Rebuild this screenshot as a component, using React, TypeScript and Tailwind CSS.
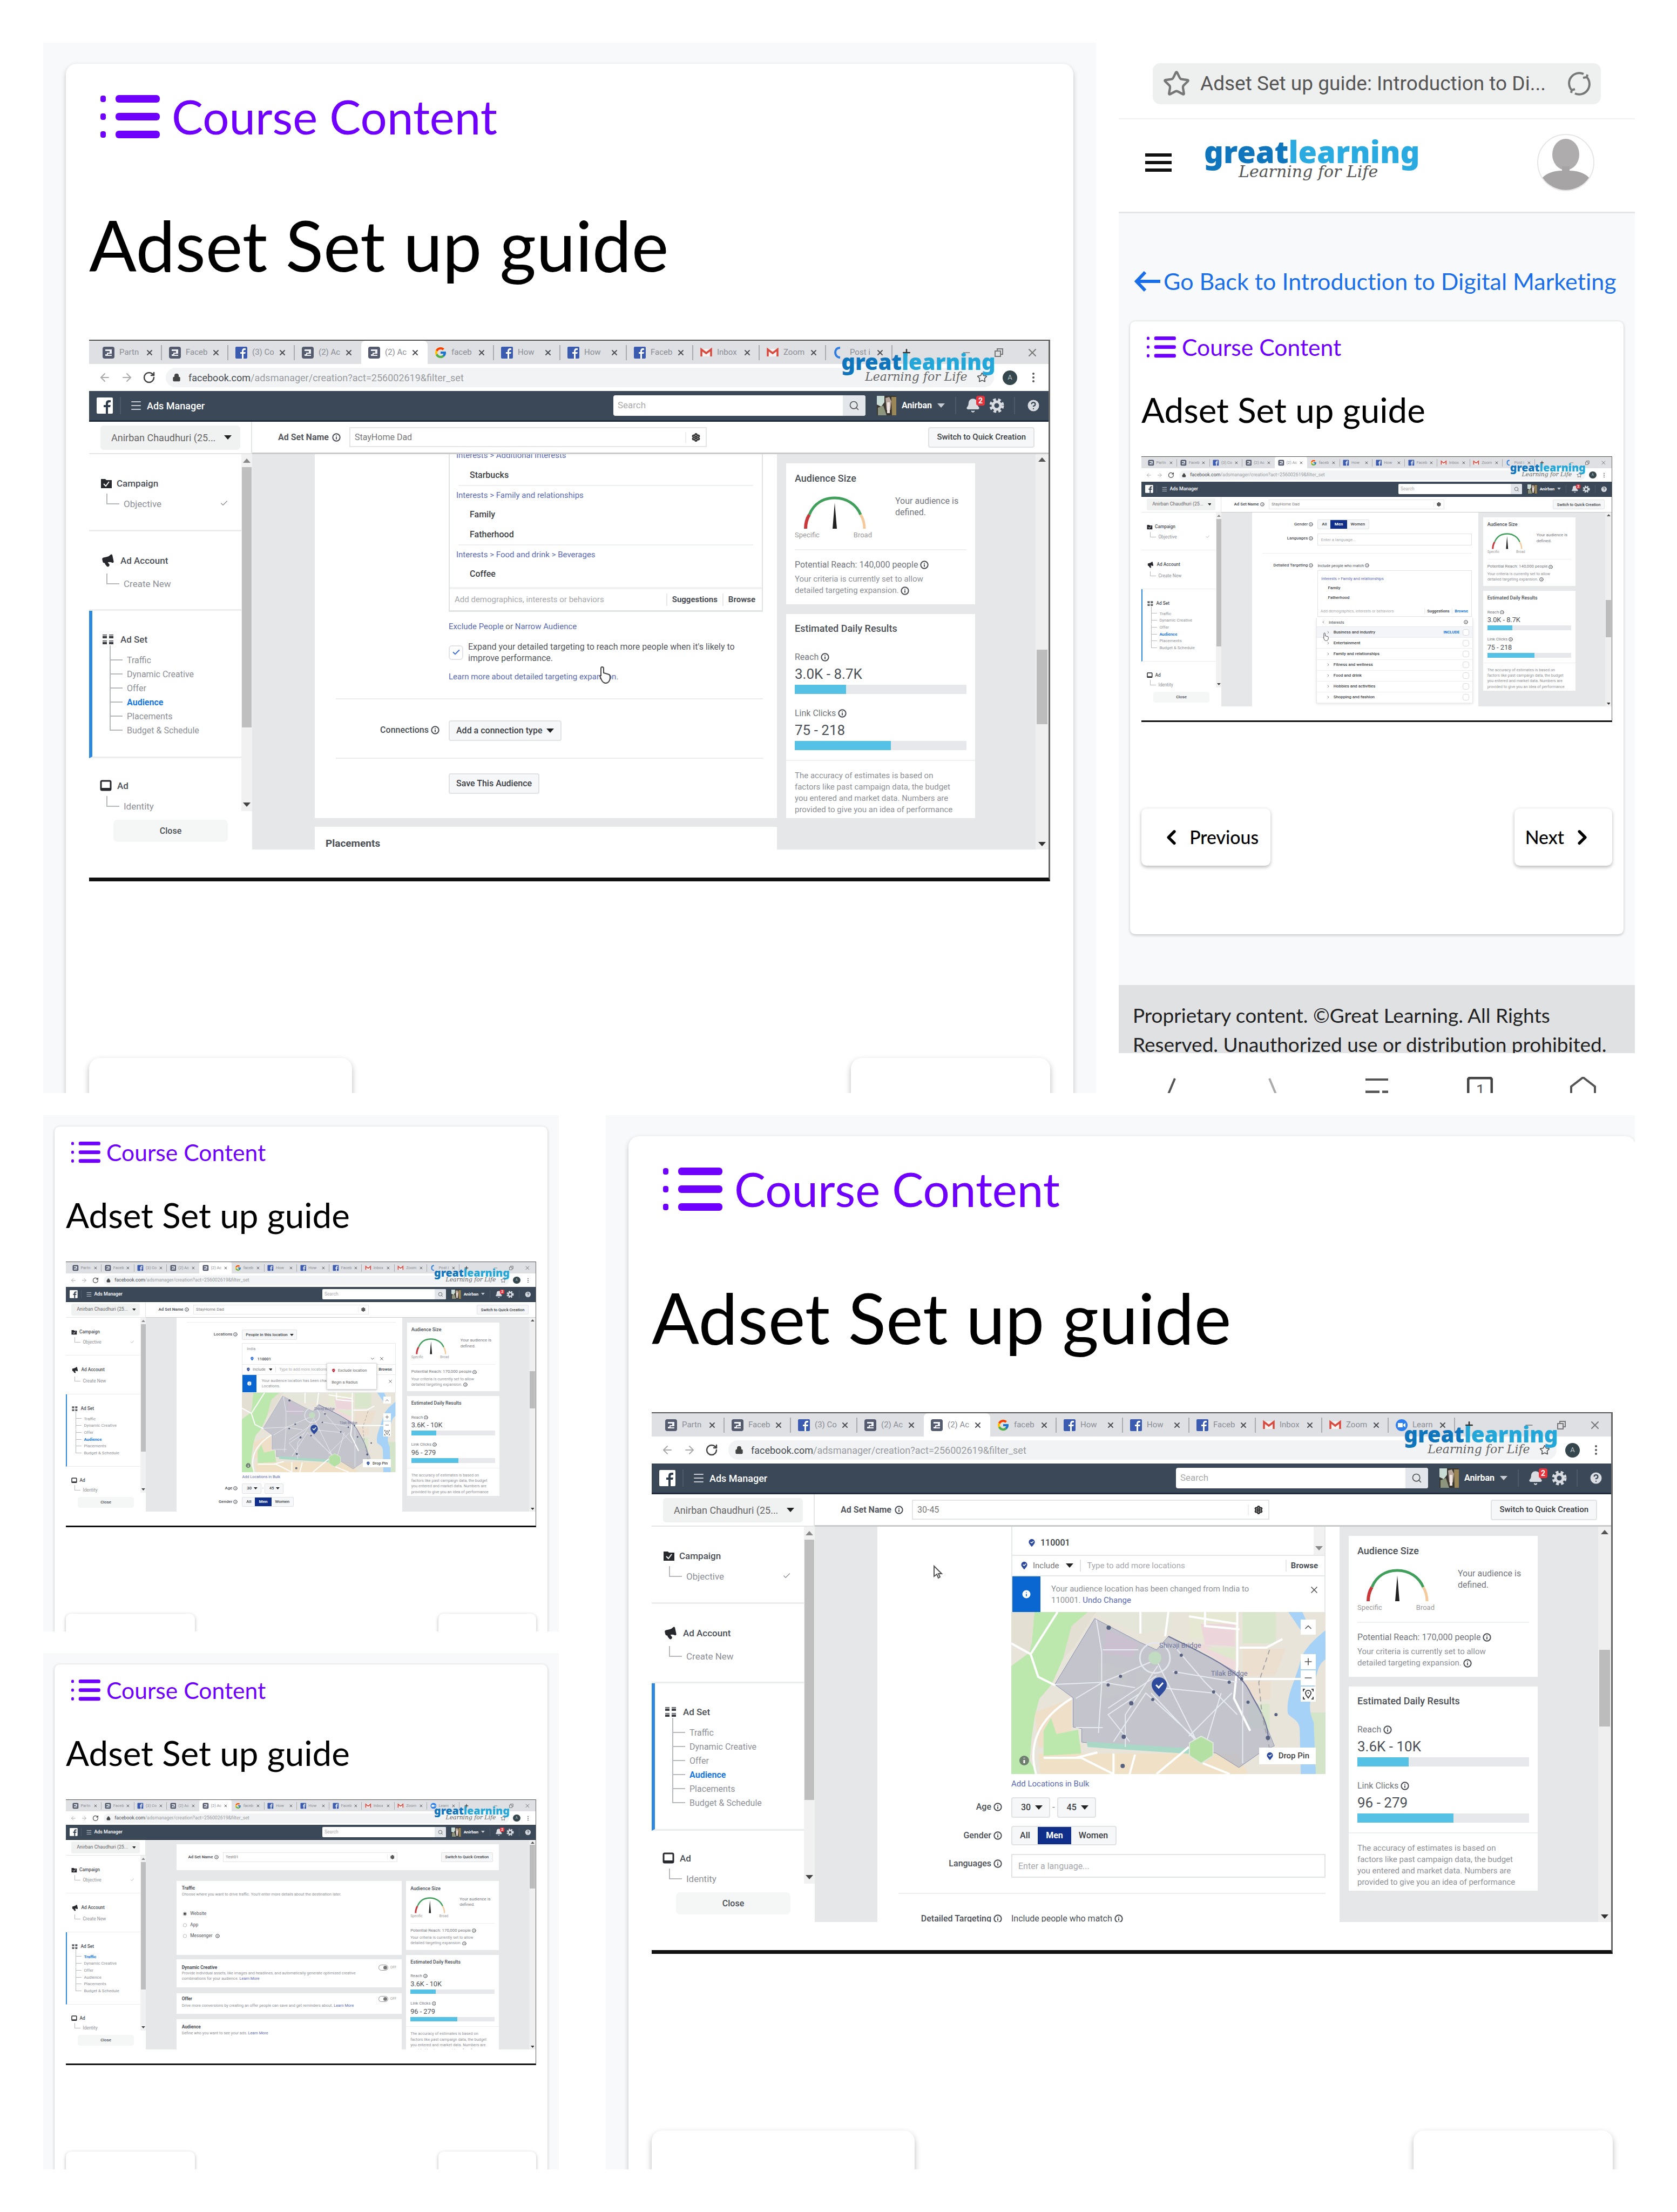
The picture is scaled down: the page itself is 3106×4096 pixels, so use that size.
import React from "react";
import {
  ArrowLeft,
  ArrowRight,
  Bell,
  Check,
  ChevronDown,
  ChevronLeft,
  ChevronRight,
  ChevronUp,
  CircleHelp,
  Info as InfoIcon,
  Lock,
  Megaphone,
  Menu,
  Minus,
  MoreVertical,
  Plus,
  RotateCw,
  Search,
  Settings,
  Star,
  X,
} from "lucide-react";
import { FcGoogle } from "react-icons/fc";

type Scene = "interests" | "browse" | "location" | "map" | "traffic";

/* ---------- small shared pieces ---------- */

const Info = () => <InfoIcon className="inline-block size-4 shrink-0 text-[#4a4d55]" strokeWidth={3} />;

const Caret = ({ className = "" }: { className?: string }) => (
  <svg viewBox="0 0 14 8" className={`h-2 w-3.5 shrink-0 fill-[#222] ${className}`} aria-hidden="true">
    <path d="M0 0h14L7 8z" />
  </svg>
);

function Logo({ large = false }: { large?: boolean }) {
  return (
    <div className="flex flex-col">
      <span
        className={
          large
            ? "font-['Noto_Sans',sans-serif] text-[56px] leading-[56px] font-black text-[#29abe2]"
            : "font-['Noto_Sans',sans-serif] text-[40px] leading-[44px] font-black text-[#22a7d8]"
        }
      >
        <span className="text-[#0f75bc]">great</span>learning
      </span>
      <span
        className={
          large
            ? "-mt-1.5 pl-16 font-['DejaVu_Serif','Liberation_Serif',serif] text-[30px] leading-8 text-[#555] italic"
            : "-mt-1.5 pl-11 font-['DejaVu_Serif','Liberation_Serif',serif] text-[22px] leading-6 text-[#666] italic"
        }
      >
        Learning for Life
      </span>
    </div>
  );
}

/* ---------- browser chrome ---------- */

const AdsFavicon = () => (
  <svg viewBox="0 0 24 24" className="size-6 shrink-0" aria-hidden="true">
    <rect x="1" y="1" width="22" height="22" rx="4" fill="#555b6e" />
    <path d="M6 6h12v12H6z" fill="#eef0f4" />
    <path d="M6 9h8v3H9v3H6zM11 14h7v2h-7z" fill="#555b6e" />
  </svg>
);
const GmailFavicon = () => (
  <svg viewBox="0 0 24 24" className="size-6 shrink-0" aria-hidden="true">
    <rect x="3" y="5" width="18" height="14" fill="#f7f2f2" />
    <path d="M3 19V6l9 7 9-7v13" fill="none" stroke="#d9493d" strokeWidth="3.5" />
  </svg>
);
const ArcFavicon = () => (
  <svg viewBox="0 0 24 24" className="size-6 shrink-0" aria-hidden="true">
    <path d="M14 3C7 3 5 8 5 12s3 9 9 9" fill="none" stroke="#2f7de1" strokeWidth="4" />
  </svg>
);
const ZoomFavicon = () => (
  <svg viewBox="0 0 24 24" className="size-6 shrink-0" aria-hidden="true">
    <circle cx="12" cy="12" r="11" fill="#2d7ff0" />
    <path d="M5 8h9v8H5zM15 11l4-3v8l-4-3z" fill="#fff" />
  </svg>
);

type TabKind = "ads" | "fb" | "google" | "gmail" | "arc" | "zoom";

function Favicon({ kind }: { kind: TabKind }) {
  if (kind === "fb") {
    return (
      <svg viewBox="0 0 24 24" className="size-6 shrink-0" aria-hidden="true">
        <rect x="1" y="1" width="22" height="22" rx="2" fill="#3b5bb0" />
        <path d="M13 23v-9h-3v-3h3V9c0-3 2-5 4-5h3v3h-2c-1 0-2 1-2 2v2h4l-1 3h-3v9z" fill="#fff" />
      </svg>
    );
  }
  if (kind === "google") return <FcGoogle className="size-6 shrink-0" />;
  if (kind === "gmail") return <GmailFavicon />;
  if (kind === "arc") return <ArcFavicon />;
  if (kind === "zoom") return <ZoomFavicon />;
  return <AdsFavicon />;
}

const BASE_TABS: { kind: TabKind; label: string }[] = [
  { kind: "ads", label: "Partn" },
  { kind: "ads", label: "Faceb" },
  { kind: "fb", label: "(3) Co" },
  { kind: "ads", label: "(2) Ac" },
  { kind: "ads", label: "(2) Ac" },
  { kind: "google", label: "faceb" },
  { kind: "fb", label: "How" },
  { kind: "fb", label: "How" },
  { kind: "fb", label: "Faceb" },
  { kind: "gmail", label: "Inbox" },
  { kind: "gmail", label: "Zoom" },
];

function BrowserChrome({ scene }: { scene: Scene }) {
  const last: { kind: TabKind; label: string } =
    scene === "map" || scene === "traffic" ? { kind: "zoom", label: "Learn" } : { kind: "arc", label: "Post i" };
  return (
    <div className="relative">
      <div className="flex h-[43px] items-center bg-[#dee0e4] pr-[18px] pl-3">
        {[...BASE_TABS, last].map((tab, i) => (
          <div
            key={i}
            className={
              i === 4
                ? "flex h-full w-[123px] items-center rounded-t-lg bg-white pr-3 pl-3"
                : "flex h-full w-[123px] items-center pl-3"
            }
          >
            <Favicon kind={tab.kind} />
            <span className="ml-2 w-11 overflow-hidden text-[15px] whitespace-nowrap text-[#8b8e95]">{tab.label}</span>
            <X className="ml-1 size-4 shrink-0 text-[#4c4f55]" strokeWidth={3} />
            {i !== 4 && i !== 3 && <span className="ml-auto h-7 w-0.5 bg-[#a9abb0]" />}
          </div>
        ))}
        <Plus className="ml-4 size-5 text-[#333]" strokeWidth={3} />
        <div className="ml-auto flex items-center gap-10 text-[#777]">
          <Minus className="size-5" />
          <svg viewBox="0 0 20 20" className="size-5 fill-none stroke-current" strokeWidth="2" aria-hidden="true">
            <path d="M3 7h10v10H3zM7 6V3h10v10h-3" />
          </svg>
          <X className="size-6" />
        </div>
      </div>
      <div className="flex h-[50px] items-center bg-white pr-[16px] pl-[17px]">
        <ArrowLeft className="size-6 text-[#aaa]" />
        <ArrowRight className="ml-[17px] size-6 text-[#aaa]" />
        <RotateCw className="ml-[17px] size-6 text-[#444]" strokeWidth={2.5} />
        <div className="ml-[19px] flex h-9 flex-1 items-center rounded-full bg-[#f1f3f4] pr-3 pl-3">
          <Lock className="size-4 fill-[#444] text-[#444]" />
          <span className="ml-3.5 text-[18px] text-[#9a9ca1]">
            <span className="text-[#4a4d52]">facebook.com</span>/adsmanager/creation?act=256002619&amp;filter_set
          </span>
          <Star className="ml-auto size-5 text-[#555]" />
        </div>
        <span className="ml-[16px] flex size-[27px] items-center justify-center rounded-full bg-[#35464d] text-[13px] text-[#b9c5cb]">
          A
        </span>
        <MoreVertical className="ml-[18px] size-6 text-[#555]" />
      </div>
      <div className="absolute top-[17px] left-[78.4%]">
        <Logo />
      </div>
    </div>
  );
}

function NavBar() {
  return (
    <div className="flex h-[57px] items-center border-b-[3px] border-[#1f2c40] bg-[#3a4858] pr-[14px] pl-[14px]">
      <svg viewBox="0 0 30 30" className="size-[30px]" aria-hidden="true">
        <rect width="30" height="30" rx="2" fill="#fff" />
        <path d="M17 30V18h-4v-4h4v-3c0-4 2-6 6-6h3v4h-2c-2 0-3 1-3 3v2h5l-1 4h-4v12z" fill="#2f3c4c" />
      </svg>
      <span className="ml-[13px] h-8 w-0.5 bg-[#4c5a6a]" />
      <Menu className="ml-[16px] size-6 text-[#c7ccd3]" />
      <span className="ml-[8px] text-[18px] font-medium text-white">Ads Manager</span>
      <div className="ml-auto flex h-[38px] w-[467px] overflow-hidden rounded-sm bg-white">
        <input
          aria-label="Search"
          placeholder="Search"
          className="min-w-0 flex-1 px-2 text-[17px] placeholder:text-[#aaa]"
        />
        <button aria-label="Run search" className="flex w-[42px] items-center justify-center bg-[#e3e6ea]">
          <Search className="size-5 text-[#555]" />
        </button>
      </div>
      <svg viewBox="0 0 36 36" className="ml-[21px] size-9" aria-hidden="true">
        <rect width="36" height="36" fill="#3a3630" />
        <path d="M0 0h14v12l-6 8-8-4z" fill="#c9dcd6" />
        <path d="M16 4l7-2 4 8-2 16h-7z" fill="#b9a79d" />
        <path d="M2 22l10-4 6 18H2z" fill="#8d957c" />
        <path d="M27 2h9v34h-8z" fill="#9b8657" />
        <path d="M19 12h5v20h-5z" fill="#efe6e4" />
      </svg>
      <span className="ml-[10px] text-[16px] font-bold text-white">Anirban</span>
      <Caret className="ml-[10px] fill-[#c7ccd3]" />
      <span className="ml-[19px] h-8 w-0.5 bg-[#4c5a6a]" />
      <span className="relative ml-[17px]">
        <Bell className="size-7 fill-[#d9dde2] text-[#d9dde2]" />
        <span className="absolute -top-1 -right-2 rounded-sm bg-[#e8323c] px-1 text-[14px] leading-[18px] font-bold text-white">
          2
        </span>
      </span>
      <svg viewBox="0 0 28 28" className="ml-[16px] size-7 fill-none stroke-[#d9dde2]" aria-hidden="true">
        <circle cx="14" cy="14" r="7" strokeWidth="5" />
        <circle cx="14" cy="14" r="11" strokeWidth="5" strokeDasharray="5 4" />
      </svg>
      <span className="ml-[18px] h-8 w-0.5 bg-[#4c5a6a]" />
      <CircleHelp className="ml-[20px] size-7 fill-[#d9dde2] text-[#3a4858]" />
    </div>
  );
}

/* ---------- ads manager side bar ---------- */

function Elbow({ label, done = false }: { label: string; done?: boolean }) {
  return (
    <div className="mt-2 flex pr-[24px] pl-[32px]">
      <span className="h-5 w-6 border-b-2 border-l-2 border-[#b5b8bc]" />
      <span className="mt-[8px] ml-2 text-[17px] leading-[22px] text-[#8d9096]">{label}</span>
      {done && <Check className="mt-2.5 ml-auto size-4 text-[#8d9096]" />}
    </div>
  );
}

const STEPS = ["Traffic", "Dynamic Creative", "Offer", "Audience", "Placements", "Budget & Schedule"];

function Sidebar({ active }: { active: string }) {
  return (
    <div className="flex w-[302px] shrink-0 flex-col bg-white">
      <div className="flex h-[60px] items-center border-r-2 border-b-2 border-[#e4e5e7] pr-[20px] pl-[21px]">
        <button className="flex h-[45px] flex-1 items-center justify-between rounded-md bg-[#f0f1f1] px-4 text-[18px] text-[#666]">
          <span className="pl-1">Anirban Chaudhuri (25...</span>
          <Caret />
        </button>
      </div>
      <div className="flex h-[661px] overflow-hidden">
        <nav aria-label="Ad steps" className="flex-1">
          <div className="h-[143px] border-b-[3px] border-[#eceded] pt-[43px]">
            <div className="flex items-center pl-[21px] text-[17px] leading-[22px] font-medium text-[#4b4f56]">
              <svg viewBox="0 0 22 20" className="mr-[8px] h-5 w-[22px]" aria-hidden="true">
                <path d="M1 2h8l2 2h10v15H1z" fill="#26282e" />
                <path d="M6 11l4 4 6-8" fill="none" stroke="#fff" strokeWidth="2" />
              </svg>
              Campaign
            </div>
            <Elbow label="Objective" done />
          </div>
          <div className="h-[147px] border-b-[3px] border-[#eceded] pt-[42px]">
            <div className="flex items-center pl-[23px] text-[17px] leading-[22px] font-medium text-[#4b4f56]">
              <Megaphone className="mr-[11px] size-6 -rotate-12 fill-[#26282e] text-[#26282e]" />
              Ad Account
            </div>
            <div className="h-1" />
            <Elbow label="Create New" />
          </div>
          <div className="h-[273px] border-b-[3px] border-b-[#eceded] border-l-[6px] border-l-[#2d88e0] pt-[42px]">
            <div className="flex items-center pl-[18px] text-[17px] leading-[22px] font-medium text-[#4b4f56]">
              <svg viewBox="0 0 22 22" className="mr-3 size-[22px]" aria-hidden="true">
                <path d="M1 2h8v7H1zM13 2h8v7h-8zM1 13h8v7H1zM13 13h8v7h-8z" fill="#3a3c42" />
                <path d="M1 4h8M13 4h8M1 15h8M13 15h8" stroke="#b5b8bc" strokeWidth="2" />
              </svg>
              Ad Set
            </div>
            <ul className="ml-[32px]">
              <li className="h-[15px] border-l-2 border-[#b5b8bc]" />
              {STEPS.map((step, i) => (
                <li key={step} className="flex h-[26px] items-center">
                  <span className="flex h-full w-6 flex-col">
                    <span className="h-[13px] border-b-2 border-l-2 border-[#b5b8bc]" />
                    {i < STEPS.length - 1 && <span className="h-[13px] border-l-2 border-[#b5b8bc]" />}
                  </span>
                  <span
                    className={
                      step === active
                        ? "ml-[8px] text-[16px] font-bold text-[#1877e0]"
                        : "ml-[8px] text-[16px] text-[#8d9096]"
                    }
                  >
                    {step}
                  </span>
                </li>
              ))}
            </ul>
          </div>
          <div className="pt-[40px]">
            <div className="flex items-center pl-[20px] text-[17px] leading-[22px] font-medium text-[#4b4f56]">
              <svg viewBox="0 0 22 22" className="mr-[10px] size-[22px] fill-none stroke-[#26282e]" aria-hidden="true">
                <rect x="2" y="2" width="18" height="17" rx="2" strokeWidth="3" />
                <path d="M3 17h16" strokeWidth="4" />
              </svg>
              Ad
            </div>
            <Elbow label="Identity" />
          </div>
        </nav>
        <div className="flex w-5 flex-col items-center bg-[#f1f1f1] py-2">
          <Caret className="w-2.5 rotate-180 fill-[#888]" />
          <div className="mt-2 h-[482px] w-[18px] bg-[#bfbfbf]" />
          <Caret className="mt-auto w-2.5 fill-[#444]" />
        </div>
      </div>
      <button className="mx-[45px] mt-[16px] h-[41px] rounded-lg bg-[#f5f6f6] text-[16px] font-medium text-[#4b4f56]">
        Close
      </button>
    </div>
  );
}

/* ---------- estimate cards ---------- */

interface Estimate {
  people: string;
  reach: string;
  clicks: string;
}

function Gauge() {
  return (
    <svg viewBox="0 0 143 62" className="h-[62px] w-[143px]" fill="none" aria-hidden="true">
      <path d="M20 62C20 53 22 44 27 36" stroke="#c9383b" strokeWidth="6" />
      <path d="M27 36C35 16 52 5 74 5s40 12 48 31" stroke="#3f9f5b" strokeWidth="5" />
      <path d="M122 36c5 8 7 17 7 26" stroke="#f5c999" strokeWidth="5" />
      <path d="M74 14l4 48h-8z" fill="#222" />
    </svg>
  );
}

function Meter({ label, value, fill }: { label: string; value: string; fill: number }) {
  return (
    <div>
      <div className="flex items-center gap-1 text-[16px] leading-5 text-[#73767d]">
        {label} <Info />
      </div>
      <div className="mt-[6px] text-[26px] leading-[30px] text-[#4b4f56]">{value}</div>
      <div className="mt-[5px] h-[17px] bg-[#e7e8ec]">
        <div className="h-full bg-[#55c1e4]" style={{ width: `${fill}%` }} />
      </div>
    </div>
  );
}

function Estimates({ people, reach, clicks }: Estimate) {
  return (
    <aside className="ml-[17px] w-[350px] shrink-0 text-[#73767d]">
      <section className="h-[261px] bg-white px-4 pt-[17px]">
        <h3 className="text-[18px] leading-[22px] font-medium text-[#4b4f56]">Audience Size</h3>
        <div className="mt-[20px] flex">
          <div>
            <Gauge />
            <div className="mt-1 flex justify-between text-[13px] leading-4 text-[#999]">
              <span>Specific</span>
              <span>Broad</span>
            </div>
          </div>
          <p className="ml-[43px] text-[16px] leading-[21px]">
            Your audience is
            <br />
            defined.
          </p>
        </div>
        <div className="mt-[18px] h-0.5 bg-[#eeeff0]" />
        <p className="mt-4 flex items-center gap-1 text-[16px] leading-[21px]">
          Potential Reach: {people} people <Info />
        </p>
        <p className="mt-[6px] text-[15px] leading-[21px] text-[#8d9096]">
          Your criteria is currently set to allow
          <br />
          detailed targeting expansion. <Info />
        </p>
      </section>
      <section className="mt-[18px] h-[378px] bg-white pt-[16px]">
        <h3 className="px-4 text-[18px] leading-[22px] font-medium text-[#4b4f56]">Estimated Daily Results</h3>
        <div className="mt-8 flex flex-col gap-[26px] px-4">
          <Meter label="Reach" value={reach} fill={30} />
          <Meter label="Link Clicks" value={clicks} fill={56} />
        </div>
        <div className="mt-[18px] h-0.5 bg-[#eeeff0]" />
        <p className="mt-[17px] px-4 text-[15px] leading-[21px] whitespace-nowrap text-[#8d9096]">
          The accuracy of estimates is based on
          <br />
          factors like past campaign data, the budget
          <br />
          you entered and market data. Numbers are
          <br />
          provided to give you an idea of performance
        </p>
      </section>
    </aside>
  );
}

/* ---------- form pieces ---------- */

function Field({ label, children, className = "" }: { label?: string; children: React.ReactNode; className?: string }) {
  return (
    <div className={`flex pr-[26px] ${className}`}>
      <div className="mr-[17px] flex h-[36px] w-[231px] shrink-0 items-center justify-end gap-1 text-[16px] font-medium whitespace-nowrap text-[#4b4f56]">
        {label && (
          <>
            {label} <Info />
          </>
        )}
      </div>
      <div className="min-w-0 flex-1">{children}</div>
    </div>
  );
}

const Rule = ({ className = "" }: { className?: string }) => (
  <div className={`mr-[26px] ml-[39px] h-0.5 bg-[#ececee] ${className}`} />
);

const Crumb = ({ children }: { children: React.ReactNode }) => (
  <div className="flex h-[34px] items-center pl-[12px] text-[15px] whitespace-nowrap text-[#5a6ab0]">{children}</div>
);

const Pick = ({ children }: { children: React.ReactNode }) => (
  <div className="flex h-[37px] items-center pl-[37px] text-[16px] font-medium text-[#3c3f45]">{children}</div>
);

function TargetInput({ browse = false }: { browse?: boolean }) {
  return (
    <div className="flex h-[39px] items-center pr-[12px] pl-[9px] text-[15px]">
      <input
        aria-label="Detailed targeting"
        placeholder="Add demographics, interests or behaviors"
        className="min-w-0 flex-1 placeholder:text-[#a5a7ab]"
      />
      <button className="border-l-2 border-[#e8e8ea] px-[9px] font-bold text-[#4b4f56]">Suggestions</button>
      <button
        className={
          browse
            ? "border-l-2 border-[#e8e8ea] pl-[9px] font-bold text-[#1877d8]"
            : "border-l-2 border-[#e8e8ea] pl-[9px] font-bold text-[#4b4f56]"
        }
      >
        Browse
      </button>
    </div>
  );
}

const GreyButton = ({ children, small = false }: { children: React.ReactNode; small?: boolean }) => (
  <button
    className={
      small
        ? "ml-auto flex h-[38px] items-center rounded-sm border-2 border-[#e1e2e4] bg-[#f6f7f8] px-3.5 text-[15px] font-medium whitespace-nowrap text-[#3c3f45]"
        : "flex h-[38px] items-center gap-2 rounded-sm border-2 border-[#e1e2e4] bg-[#f6f7f8] px-3 text-[16px] font-medium whitespace-nowrap text-[#3c3f45]"
    }
  >
    {children}
  </button>
);

function GenderRow({ className = "" }: { className?: string }) {
  return (
    <Field label="Gender" className={className}>
      <div className="inline-flex h-[36px] rounded-sm border-2 border-[#e1e2e4] bg-[#f6f7f8] text-[16px] font-medium text-[#3c3f45]">
        <button className="w-[47px]">All</button>
        <button className="w-[62px] bg-[#0f2f8a] font-bold text-white">Men</button>
        <button className="w-[82px]">Women</button>
      </div>
    </Field>
  );
}

function LanguageRow({ className = "" }: { className?: string }) {
  return (
    <Field label="Languages" className={className}>
      <input
        aria-label="Languages"
        placeholder="Enter a language..."
        className="h-[44px] w-full border-2 border-[#e1e2e4] px-[11px] text-[16px] placeholder:text-[#a5a7ab]"
      />
    </Field>
  );
}

function AgeRow({ className = "" }: { className?: string }) {
  return (
    <Field label="Age" className={className}>
      <div className="flex items-center gap-1 text-[#777]">
        <GreyButton>
          <span className="pl-1">30</span> <Caret />
        </GreyButton>
        -
        <GreyButton>
          <span className="pl-1">45</span> <Caret />
        </GreyButton>
      </div>
    </Field>
  );
}

/* ---------- scenes ---------- */

function InterestsForm() {
  return (
    <div className="flex min-w-0 flex-1 flex-col">
      <div className="h-[674px] shrink-0 bg-white">
        <Field>
          <div className="border-x-2 border-b-[3px] border-[#e1e2e4]">
            <div className="-mt-2 flex h-7 pl-[12px] text-[15px] leading-5 text-[#5a6ab0]">
              Interests &gt; Additional Interests
            </div>
            <Pick>Starbucks</Pick>
            <div className="mx-4 h-0.5 bg-[#eeeff0]" />
            <Crumb>Interests &gt; Family and relationships</Crumb>
            <Pick>Family</Pick>
            <Pick>Fatherhood</Pick>
            <div className="mx-4 h-0.5 bg-[#eeeff0]" />
            <Crumb>Interests &gt; Food and drink &gt; Beverages</Crumb>
            <Pick>Coffee</Pick>
            <div className="mt-[6px] h-1 bg-[#f1f1f2]" />
            <TargetInput />
          </div>
          <p className="mt-[17px] text-[15px] leading-[21px] text-[#5a6ab0]">
            <a href="#exclude">Exclude People</a> <span className="text-[#666]">or</span>{" "}
            <a href="#narrow">Narrow Audience</a>
          </p>
          <label className="mt-4 flex items-center text-[16px] leading-[21px] text-[#55585e]">
            <input type="checkbox" className="peer sr-only" defaultChecked />
            <span className="mr-[9px] flex size-[27px] shrink-0 items-center justify-center rounded-md border-2 border-[#e1e2ea]">
              <Check className="size-4 text-[#3f6fd0]" strokeWidth={3} />
            </span>
            <span className="whitespace-nowrap">
              Expand your detailed targeting to reach more people when it's likely to
              <br />
              improve performance.
            </span>
          </label>
          <a href="#learn" className="mt-3.5 block text-[15px] leading-[21px] text-[#5a6ab0]">
            Learn more about detailed targeting expansion.
          </a>
        </Field>
        <Rule className="mt-[29px]" />
        <Field label="Connections" className="mt-[39px]">
          <GreyButton>
            Add a connection type <Caret />
          </GreyButton>
        </Field>
        <Rule className="mt-[31px]" />
        <Field className="mt-[27px]">
          <GreyButton>Save This Audience</GreyButton>
        </Field>
      </div>
      <div className="mt-4 h-[60px] shrink-0 bg-white pt-[19px] pl-[20px] text-[19px] leading-6 font-bold text-[#4b4f56]">
        Placements
      </div>
    </div>
  );
}

const CATEGORIES = [
  "Business and industry",
  "Entertainment",
  "Family and relationships",
  "Fitness and wellness",
  "Food and drink",
  "Hobbies and activities",
  "Shopping and fashion",
];

function BrowseForm() {
  return (
    <div className="min-w-0 flex-1 bg-white">
      <GenderRow className="pt-[26px]" />
      <LanguageRow className="mt-[18px]" />
      <Rule className="mt-[29px]" />
      <Field label="Detailed Targeting" className="mt-[26px]">
        <div className="flex h-[38px] items-center gap-1 text-[15px] text-[#4b4f56]">
          Include people who match <Info />
        </div>
        <div className="border-2 border-[#e1e2e4] pt-3">
          <Crumb>Interests &gt; Family and relationships</Crumb>
          <Pick>Family</Pick>
          <Pick>Fatherhood</Pick>
          <div className="h-[11px]" />
          <TargetInput browse />
        </div>
        <ul className="-mx-1 mt-1 border-x-2 border-[#e6e7e9] bg-white text-[16px] text-[#3c3f45] shadow-[0_4px_10px_rgba(0,0,0,0.12)]">
          <li className="flex h-[36px] items-center gap-3 border-b-2 border-[#e6e7e9] px-4 text-[15px]">
            <ChevronLeft className="size-4" /> Interests <span className="ml-auto" />
            <Info />
          </li>
          {CATEGORIES.map((c, i) => (
            <li
              key={c}
              className={
                i === 0
                  ? "flex h-[41px] items-center border-b-2 border-[#eceded] bg-[#f4f5f8] pr-3 pl-[34px] font-medium"
                  : "flex h-[41px] items-center border-b-2 border-[#eceded] pr-3 pl-[34px] font-medium"
              }
            >
              <ChevronRight className="mr-3 size-4" />
              <label htmlFor={`cat-${i}`}>{c}</label>
              {i === 0 && <span className="ml-auto text-[15px] font-bold text-[#1877d8]">INCLUDE</span>}
              <input
                id={`cat-${i}`}
                type="checkbox"
                className={
                  i === 0
                    ? "ml-3 size-6 appearance-none rounded-lg border-2 border-[#d5d7dc] bg-white"
                    : "ml-auto size-6 appearance-none rounded-lg border-2 border-[#d5d7dc] bg-white"
                }
              />
            </li>
          ))}
        </ul>
      </Field>
    </div>
  );
}

function PinIcon({ className = "" }: { className?: string }) {
  return (
    <svg viewBox="0 0 20 20" className={`shrink-0 ${className}`} aria-hidden="true">
      <path d="M10 19C5 13 3 11 3 8a7 7 0 0114 0C17 11 15 13 10 19z" />
      <path d="M7 8l3 2 4-4" fill="none" stroke="#fff" strokeWidth="2" />
    </svg>
  );
}

function CityMap() {
  return (
    <div className="relative h-[300px] overflow-hidden">
      <svg viewBox="0 0 584 300" preserveAspectRatio="none" className="size-full" aria-hidden="true">
        <rect width="584" height="300" fill="#e8e4da" />
        <path d="M330 0h90v58l-90-10z" fill="#e6e8d3" />
        <path d="M352 22h64v42l-56-4z" fill="#ecd6dc" />
        <path d="M430 0h62v58h-62zM440 170h40v50l-40-10z" fill="#d9e6cc" />
        <path d="M334 60h30l52 26v34l-30-30z" fill="#eed9db" />
        <path d="M360 66h56v24z" fill="#dfe8cf" />
        <path d="M430 68h80l-20 50h-60zM432 128h50v34h-40z" fill="#ecdfcf" />
        <path d="M540 186h44v114h-44z" fill="#d3e4c8" />
        <path d="M44 186l68-26v60l20 30H50z" fill="#f0dfc8" />
        <path d="M50 262h370l20 38H54z" fill="#efe0c6" />
        <path d="M160 0h140v30l-60 10-80-34z" fill="#e3e6d8" />
        {/* parks */}
        <path
          d="M43 0h114l-30 40-31 47-21 47-23 27-8 30-6 40-4 44 14 25H0V100l30-22 8-20z"
          fill="#bde8ad"
        />
        <path d="M0 0h43l-6 60-3 16L0 60z" fill="#e3dfd2" />
        <path d="M112 26l30-26h14l-40 66-20 20z" fill="#e3dfd2" />
        <path d="M60 220l14-24 10 30 40-8 6 44-70 4z" fill="#bde8ad" />
        {/* river */}
        <path
          d="M584 34c-26 20-44 40-48 62-8 30-26 60-22 92 8 10 22 12 22 30l2 82h28l-4-96c-10-20-8-40 0-56 4-24 6-52 22-60z"
          fill="#a6d2f8"
        />
        <path d="M515 0h26l10 22-10 16z" fill="#a6d2f8" />
        {/* highlighted area */}
        <path
          d="M155 12l84 44 31 14 22-25 60 30 71 39 36 60 30 74-20 8-46 32-43-27-170-13-79-7v-25l-16-3v-54l-34-25z"
          fill="#b3b7c6"
          fillOpacity="0.7"
          stroke="#8a92b4"
          strokeWidth="1"
        />
        <path d="M176 32l60 26-10 26-54-8z" fill="#cdbfd0" fillOpacity="0.7" />
        <path d="M160 90l60 16-10 50-50 4zM230 110l36-8 6 40-40 30z" fill="#c6c8ca" fillOpacity="0.5" />
        {/* boulevard and roads */}
        <path d="M140 240l214 14-2 10-210-14z" fill="#a9d8c6" />
        <g fill="none" stroke="#fff" strokeWidth="4">
          <path d="M0 58l36 20L86 0M36 78l14 42 32 16" />
          <path d="M46 300c-14-50 0-100 66-140" />
          <path d="M60 270h70l60 30M330 250l-60 50M356 280l50 20M120 270l40-10M190 262v38M230 264l-10 36" />
          <path d="M292 0l-6 45M240 0v40M360 0v26l64 6M420 0v100l-6 60 30 60M424 66h50l30-16M423 124h120M330 8l90 14" />
        </g>
        <g fill="none" stroke="#e8eaf2" strokeWidth="2">
          <path d="M170 70h66M158 14l10 60v60l-6 90M82 134l88-4 100-42M270 90l80 160M260 150l94 100M190 240l60-90 110 100M300 110l120 20M430 130v150" />
          <path d="M240 150l-60 40 40 50M275 140l100 10M330 230l80-80M212 250v-60l60-90M120 160l50-30 60 10M120 214h50M300 60l60 70 60 60M270 118l-90 60M390 150l-30 100" />
        </g>
        <path d="M353 230l22 12v24l-22 14-22-14v-24z" fill="#b4e0a4" stroke="#dfe9df" strokeWidth="2" />
        <circle cx="267" cy="85" r="28" fill="none" stroke="#e4e8ee" strokeWidth="3" />
        <circle cx="267" cy="85" r="12" fill="#c1dcc0" />
        <path d="M292 45c60 30 130 60 150 100 14 30 34 50 36 92" fill="none" stroke="#70759a" strokeWidth="2" />
        <path d="M480 70l-20 60 6 60 20 90" fill="none" stroke="#a5a5a5" strokeWidth="2" strokeDasharray="9 6" />
        <g fill="#55617f">
          <circle cx="181" cy="29" r="4" />
          <circle cx="203" cy="119" r="3" />
          <circle cx="180" cy="135" r="3" />
          <circle cx="223" cy="169" r="4" />
          <circle cx="263" cy="162" r="3" />
          <circle cx="306" cy="112" r="3" />
          <circle cx="316" cy="80" r="3" />
          <circle cx="376" cy="148" r="3" />
          <circle cx="405" cy="130" r="3" />
          <circle cx="428" cy="124" r="3" />
          <circle cx="440" cy="167" r="3" />
          <circle cx="209" cy="231" r="4" />
          <circle cx="207" cy="285" r="4" />
          <circle cx="477" cy="233" r="4" />
          <circle cx="492" cy="190" r="3" />
        </g>
        <text x="275" y="66" fontSize="13" fill="#70759a" fontFamily="Roboto, sans-serif">
          Shivaji Bridge
        </text>
        <text x="371" y="118" fontSize="13" fill="#70759a" fontFamily="Roboto, sans-serif">
          Tilak Bridge
        </text>
        <path d="M275 157c-8-9-14-14-14-22a14 14 0 0128 0c0 8-6 13-14 22z" fill="#2d4a9c" />
        <path d="M269 135l5 5 8-9" fill="none" stroke="#fff" strokeWidth="3" />
        <circle cx="24" cy="275" r="9" fill="#6f7f6f" />
        <path d="M24 270v1M24 274v6" stroke="#fff" strokeWidth="3" />
      </svg>
      <div className="absolute top-[14px] right-[18px] flex flex-col text-[#555]">
        <button aria-label="Collapse map" className="flex size-7 items-center justify-center bg-white">
          <ChevronUp className="size-5" />
        </button>
        <button aria-label="Zoom in" className="mt-9 flex size-7 items-center justify-center bg-white">
          <Plus className="size-5" />
        </button>
        <button aria-label="Zoom out" className="mt-0.5 flex size-7 items-center justify-center bg-white">
          <Minus className="size-5" />
        </button>
        <button aria-label="Locate" className="mt-0.5 flex size-7 items-center justify-center bg-white">
          <svg viewBox="0 0 20 20" className="size-5 fill-none stroke-[#444]" strokeWidth="2" aria-hidden="true">
            <path d="M10 17c-3-4-5-6-5-9a5 5 0 0110 0c0 3-2 5-5 9z" />
            <path d="M1 5V1h3M16 1h3v4M1 15v4h3M19 15v4h-3M9 8h2" />
          </svg>
        </button>
      </div>
      <button className="absolute right-[18px] bottom-[18px] flex h-[31px] items-center gap-2 bg-white px-3 text-[15px] font-medium text-[#444]">
        <PinIcon className="size-4 fill-[#2d4a9c]" /> Drop Pin
      </button>
    </div>
  );
}

function IncludeRow() {
  return (
    <div className="flex h-10 items-center border-y-2 border-[#e6e7e9] pr-3 pl-[14px] text-[15px] text-[#777]">
      <PinIcon className="mr-2 size-4 fill-[#2d4a9c]" />
      <span>Include</span>
      <Caret className="mr-3 ml-3 w-2.5" />
      <input
        aria-label="Locations"
        placeholder="Type to add more locations"
        className="min-w-0 flex-1 border-l-2 border-[#e1e2e4] pl-3 placeholder:text-[#a5a7ab]"
      />
      <button className="border-l-2 border-[#e8e8ea] pl-2 font-bold text-[#4b4f56]">Browse</button>
    </div>
  );
}

function Notice({ children }: { children: React.ReactNode }) {
  return (
    <div className="flex h-[66px] text-[15px] leading-[21px] text-[#8d9096]">
      <span className="flex w-[52px] shrink-0 items-center justify-center bg-[#0a66d0]">
        <InfoIcon className="size-5 fill-white text-[#0a66d0]" />
      </span>
      <p className="flex-1 pt-[13px] pl-[20px]">{children}</p>
      <X className="mt-[15px] mr-[9px] size-5 text-[#555]" />
    </div>
  );
}

function LocationForm() {
  return (
    <div className="min-w-0 flex-1 bg-white">
      <Rule className="mt-[16px]" />
      <Field label="Locations" className="mt-[27px]">
        <GreyButton>
          People in this location <Caret />
        </GreyButton>
        <div className="relative mt-3 border-2 border-[#e6e7e9] text-[15px]">
          <div className="flex h-[78px] flex-col justify-center pr-[40px] pl-[16px] text-[#8d9096]">
            <span className="flex h-[38px] items-center">India</span>
            <span className="flex h-[38px] items-center font-medium text-[#3c3f45]">
              <PinIcon className="mx-3 size-4 fill-[#2d6fe0]" /> 110001
              <ChevronDown className="mr-4 ml-auto size-5" />
              <X className="size-5" />
            </span>
          </div>
          <IncludeRow />
          <Notice>
            Your audience location has been changed
            <br />
            Locations.
          </Notice>
          <div className="absolute top-[74px] right-[68px] flex h-[100px] w-[190px] flex-col justify-around border-2 border-[#d9dadd] bg-white px-4 py-1 shadow-[0_3px_8px_rgba(0,0,0,0.25)]">
            <button className="flex items-center gap-2 text-[15px] text-[#666]">
              <PinIcon className="size-4 fill-[#c2253a]" /> Exclude location
            </button>
            <button className="text-left text-[15px] text-[#666]">Begin a Radius</button>
          </div>
        </div>
        <CityMap />
        <a href="#bulk" className="mt-2 block text-[15px] leading-5 text-[#5a6ab0]">
          Add Locations in Bulk
        </a>
      </Field>
      <AgeRow className="mt-[15px]" />
      <GenderRow className="mt-[14px]" />
    </div>
  );
}

function MapForm() {
  return (
    <div className="min-w-0 flex-1 bg-white">
      <Field>
        <div className="border-x-2 border-[#e6e7e9]">
          <div className="flex h-[52px] items-center pt-2 pl-[28px] text-[16px] font-medium text-[#3c3f45]">
            <PinIcon className="mr-2 size-4 fill-[#2d4a9c]" /> 110001
            <span className="-mt-2 ml-auto flex h-[52px] w-5 items-end justify-center bg-[#f1f1f1] pb-2">
              <Caret className="w-2.5 fill-[#888]" />
            </span>
          </div>
          <IncludeRow />
          <Notice>
            Your audience location has been changed from India to
            <br />
            110001.{" "}
            <a href="#undo" className="text-[#5a6ab0]">
              Undo Change
            </a>
          </Notice>
        </div>
        <CityMap />
        <a href="#bulk" className="mt-2 block text-[15px] leading-5 text-[#5a6ab0]">
          Add Locations in Bulk
        </a>
      </Field>
      <AgeRow className="mt-[15px]" />
      <GenderRow className="mt-[15px]" />
      <LanguageRow className="mt-[16px]" />
      <Rule className="mt-[28px]" />
      <Field label="Detailed Targeting" className="mt-[28px]">
        <div className="flex h-[36px] items-center gap-1 text-[16px] text-[#4b4f56]">
          Include people who match <Info />
        </div>
      </Field>
    </div>
  );
}

function Switch({ label }: { label: string }) {
  return (
    <span className="flex items-center gap-2 text-[13px] text-[#999]">
      <button
        role="switch"
        aria-checked="false"
        aria-label={label}
        className="flex h-[22px] w-9 items-center justify-end rounded-full border-2 border-[#8d9096] bg-white p-0.5"
      >
        <span className="h-full w-3.5 rounded-full bg-[#777]" />
      </button>
      OFF
    </span>
  );
}

function TrafficForm() {
  return (
    <div className="flex min-w-0 flex-1 flex-col text-[15px] leading-5 text-[#8d9096]">
      <section className="h-[280px] shrink-0 bg-white px-5 pt-[15px]">
        <h3 className="text-[17px] leading-[22px] font-bold text-[#4b4f56]">Traffic</h3>
        <p className="mt-1 whitespace-nowrap">
          Choose where you want to drive traffic. You'll enter more details about the destination later.
        </p>
        <div role="radiogroup" aria-label="Traffic destination" className="mt-[42px] flex flex-col text-[17px] text-[#4b4f56]">
          {["Website", "App", "Messenger"].map((name, i) => (
            <label key={name} className="flex h-[42px] items-center gap-3">
              <input type="radio" name="destination" defaultChecked={i === 0} className="ml-1 size-4 accent-[#333]" />
              {name}
              {i === 2 && <Info />}
            </label>
          ))}
        </div>
      </section>
      <section className="mt-4 h-[106px] shrink-0 bg-white px-5 pt-5">
        <div className="flex justify-between">
          <h3 className="text-[17px] leading-[22px] font-bold text-[#4b4f56]">Dynamic Creative</h3>
          <Switch label="Dynamic Creative" />
        </div>
        <p className="whitespace-nowrap">
          Provide individual assets, like images and headlines, and automatically generate optimized creative
          <br />
          combinations for your audience.{" "}
          <a href="#dynamic" className="text-[#5a6ab0]">
            Learn More
          </a>
        </p>
      </section>
      <section className="mt-[21px] h-[78px] shrink-0 bg-white px-5 pt-3">
        <div className="flex justify-between">
          <h3 className="text-[17px] leading-[22px] font-bold text-[#4b4f56]">Offer</h3>
          <Switch label="Offer" />
        </div>
        <p className="mt-1 whitespace-nowrap">
          Drive more conversions by creating an offer people can save and get reminders about.{" "}
          <a href="#offer" className="text-[#5a6ab0]">
            Learn More
          </a>
        </p>
      </section>
      <section className="mt-[21px] h-[120px] shrink-0 bg-white px-5 pt-[18px]">
        <h3 className="text-[17px] leading-[22px] font-bold text-[#4b4f56]">Audience</h3>
        <p className="mt-0.5 whitespace-nowrap">
          Define who you want to see your ads.{" "}
          <a href="#audience" className="text-[#5a6ab0]">
            Learn More
          </a>
        </p>
      </section>
    </div>
  );
}

function NameFields({ name, short = false }: { name: string; short?: boolean }) {
  return (
    <>
      <span className="flex items-center gap-1.5 text-[16px] font-bold whitespace-nowrap text-[#55585e]">
        Ad Set Name <Info />
      </span>
      <div className={`ml-4 flex h-[37px] items-center border-2 border-[#e4e5e7] bg-white ${short ? "w-[660px]" : "w-[662px]"}`}>
        <input aria-label="Ad Set Name" defaultValue={name} className="min-w-0 flex-1 px-2 text-[16px] text-[#777]" />
        <span className="flex h-5 items-center border-l-2 border-[#eee] px-2.5">
          <Settings className="size-4 text-[#333]" strokeWidth={4} />
        </span>
      </div>
      <GreyButton small>Switch to Quick Creation</GreyButton>
    </>
  );
}

function PageScrollbar({ thumb }: { thumb: string }) {
  return (
    <div className="ml-auto flex w-6 shrink-0 flex-col items-center bg-[#efefef] py-1.5">
      <Caret className="w-2.5 rotate-180 fill-[#555]" />
      <div className={`w-5 bg-[#bcbcbc] ${thumb}`} />
      <Caret className="mt-auto w-2.5 fill-[#333]" />
    </div>
  );
}

const HandCursor = () => (
  <svg viewBox="0 0 24 34" className="h-[34px] w-6" aria-hidden="true">
    <path
      d="M6 2c2 0 3 1 3 3v8l10 3c2 1 2 3 2 5 0 6-3 11-8 11-6 0-8-6-10-11-2-3 0-4 1-2V5c0-2 1-3 2-3z"
      fill="#fff"
      stroke="#444"
      strokeWidth="2"
    />
  </svg>
);

interface SceneData extends Estimate {
  name: string;
  thumb: string;
}

const SCENES: Record<Scene, SceneData> = {
  interests: {
    name: "StayHome Dad",
    people: "140,000",
    reach: "3.0K - 8.7K",
    clicks: "75 - 218",
    thumb: "mt-[348px] h-[138px]",
  },
  browse: {
    name: "StayHome Dad",
    people: "140,000",
    reach: "3.0K - 8.7K",
    clicks: "75 - 218",
    thumb: "mt-[316px] h-[140px]",
  },
  location: {
    name: "StayHome Dad",
    people: "170,000",
    reach: "3.6K - 10K",
    clicks: "96 - 279",
    thumb: "mt-[188px] h-[140px]",
  },
  map: {
    name: "30-45",
    people: "170,000",
    reach: "3.6K - 10K",
    clicks: "96 - 279",
    thumb: "mt-[214px] h-[142px]",
  },
  traffic: {
    name: "Test01",
    people: "170,000",
    reach: "3.6K - 10K",
    clicks: "96 - 279",
    thumb: "mt-1 h-[167px]",
  },
};

function VideoFrame({ scene }: { scene: Scene }) {
  const { name, thumb, ...estimate } = SCENES[scene];
  return (
    <div className="flex h-[1003px] flex-col overflow-hidden border-t-2 border-r-[3px] border-b-[7px] border-t-[#555] border-r-[#666] border-b-[#111] bg-white font-[Roboto,sans-serif]">
      <BrowserChrome scene={scene} />
      <NavBar />
      <div className="flex h-[792px] shrink-0 overflow-hidden">
        <Sidebar active={scene === "traffic" ? "Traffic" : "Audience"} />
        {scene === "traffic" ? (
          <div className="flex min-w-0 flex-1 bg-[#e6e7e8]">
            <div className="mr-[115px] ml-[116px] flex min-w-0 flex-1 flex-col pt-[16px]">
              <div className="flex h-[99px] shrink-0 items-center bg-white pr-[22px] pl-[44px]">
                <NameFields name={name} short />
              </div>
              <div className="mt-[41px] flex">
                <TrafficForm />
                <Estimates {...estimate} />
              </div>
            </div>
            <PageScrollbar thumb={thumb} />
          </div>
        ) : (
          <div className="flex min-w-0 flex-1 flex-col">
            <div className="flex h-[60px] shrink-0 items-center border-b-[3px] border-[#c9cacc] pr-[26px] pl-[48px]">
              <NameFields name={name} />
            </div>
            <div className="relative flex min-h-0 flex-1 overflow-hidden bg-[#e6e7e8] pl-[116px]">
              {scene === "interests" && <InterestsForm />}
              {scene === "browse" && <BrowseForm />}
              {scene === "location" && <LocationForm />}
              {scene === "map" && <MapForm />}
              <div className="mr-[112px] pt-[17px]">
                <Estimates {...estimate} />
              </div>
              <PageScrollbar thumb={thumb} />
              {scene === "interests" && (
                <span className="absolute top-[392px] left-[642px]">
                  <HandCursor />
                </span>
              )}
              {scene === "browse" && (
                <span className="absolute top-[452px] left-[384px]">
                  <HandCursor />
                </span>
              )}
              {scene === "map" && (
                <svg viewBox="0 0 18 26" className="absolute top-[71px] left-[219px] h-[26px] w-[18px]" aria-hidden="true">
                  <path d="M2 2v19l5-4 3 7 3-2-3-6h6z" fill="#fff" stroke="#555" strokeWidth="2" />
                </svg>
              )}
            </div>
          </div>
        )}
      </div>
    </div>
  );
}

/* ---------- course page ---------- */

function CourseCard({ scene }: { scene: Scene }) {
  return (
    <article className="h-[2316px] rounded-[20px] bg-white px-[43px] pt-[48px] shadow-[0_4px_10px_rgba(0,0,0,0.22)]">
      <a href="#content" className="flex h-[100px] items-center pl-[21px] text-[87px] text-[#6f00ff]">
        <svg viewBox="0 0 110 80" className="mr-[22px] h-20 w-[110px] fill-current" aria-hidden="true">
          <rect x="0" y="1" width="10" height="12" rx="4" />
          <rect x="0" y="34" width="10" height="12" rx="4" />
          <rect x="0" y="67" width="10" height="12" rx="4" />
          <rect x="28" y="0" width="82" height="14" rx="6" />
          <rect x="28" y="33" width="82" height="14" rx="6" />
          <rect x="28" y="66" width="82" height="14" rx="6" />
        </svg>
        Course Content
      </a>
      <h1 className="mt-[107px] text-[130px] leading-[160px] whitespace-nowrap text-black">Adset Set up guide</h1>
      <div className="mt-[96px]">
        <VideoFrame scene={scene} />
      </div>
      <div className="mt-[327px] flex justify-between text-[69px] font-medium text-black">
        <button className="flex h-[217px] w-[487px] items-center justify-end gap-6 rounded-[20px] pr-11 shadow-[0_5px_12px_rgba(0,0,0,0.28)]">
          <ChevronLeft className="size-[88px]" strokeWidth={3} />
          Previous
        </button>
        <button className="flex h-[217px] w-[369px] items-center justify-start gap-6 rounded-[20px] pl-10 shadow-[0_5px_12px_rgba(0,0,0,0.28)]">
          Next
          <ChevronRight className="size-[88px]" strokeWidth={3} />
        </button>
      </div>
    </article>
  );
}

function LargePanel({ scene, flush = false }: { scene: Scene; flush?: boolean }) {
  return (
    <section
      className={
        flush
          ? "h-[1952px] overflow-hidden bg-[#f8f9fb] pt-[39px] pl-[42px]"
          : "h-[1945px] overflow-hidden bg-[#f8f9fb] px-[42px] pt-[39px]"
      }
    >
      <div className={flush ? "-mr-0.5" : ""}>
        <CourseCard scene={scene} />
      </div>
    </section>
  );
}

function SmallPanel({ scene }: { scene: Scene }) {
  return (
    <section className="h-[956px] overflow-hidden bg-[#f8f9fb] px-[21px] pt-[21px]">
      <div className="[zoom:0.49]">
        <CourseCard scene={scene} />
      </div>
    </section>
  );
}

function PhonePanel() {
  return (
    <section className="flex h-[1945px] flex-col overflow-hidden bg-[#f8f9fb]">
      <div className="h-[142px] shrink-0 border-b-2 border-[#f1f1f1] bg-white px-[63px] pt-[38px]">
        <div className="flex h-[76px] items-center rounded-[14px] bg-[#eeefef] px-[18px] font-[Roboto,sans-serif] text-[37px] text-[#555]">
          <Star className="size-[52px] text-[#777]" />
          <span className="ml-[18px] flex-1 whitespace-nowrap">Adset Set up guide: Introduction to Di...</span>
          <svg viewBox="0 0 44 44" className="size-11 fill-none stroke-[#777]" strokeWidth="4" aria-hidden="true">
            <path d="M30 4A19 19 0 008 34l6-2M8 34l-1 5M14 40A19 19 0 0036 10l-7 1M36 10l1-5" />
          </svg>
        </div>
      </div>
      <div className="flex h-[174px] shrink-0 items-center border-b-[3px] border-[#e4e4e6] bg-white pr-[75px] pb-[12px] pl-[49px]">
        <button aria-label="Menu" className="flex w-[49px] flex-col gap-[8px]">
          <span className="h-[6px] bg-[#111]" />
          <span className="h-[6px] bg-[#111]" />
          <span className="h-[6px] bg-[#111]" />
        </button>
        <div className="-mt-4 ml-[60px]">
          <Logo large />
        </div>
        <svg viewBox="0 0 106 106" className="ml-auto size-[106px]" aria-hidden="true">
          <circle cx="53" cy="53" r="52" fill="#fff" stroke="#e6e6e8" strokeWidth="2" />
          <ellipse cx="53" cy="38" rx="25" ry="29" fill="#aeacac" />
          <path d="M46 60h14v8c14 0 28 4 36 13a52 52 0 01-86 0c8-9 22-13 36-13z" fill="#a6a4a4" />
        </svg>
      </div>
      <a
        href="#back"
        className="mt-[98px] flex h-[56px] shrink-0 items-center pl-[29px] text-[43px] whitespace-nowrap text-[#1a6fe8] [font-variant-ligatures:none]"
      >
        <svg viewBox="0 0 48 40" className="mr-[6px] h-10 w-12 fill-none stroke-current" strokeWidth="6" aria-hidden="true">
          <path d="M4 20h44M20 3L4 20l16 17" />
        </svg>
        Go Back to Introduction to Digital Marketing
      </a>
      <div className="mx-[21px] mt-[46px] shrink-0">
        <div className="[zoom:0.49]">
          <CourseCard scene="browse" />
        </div>
      </div>
      <footer className="mt-[94px] h-[126px] shrink-0 overflow-hidden bg-[#dfe1e3] pt-[29px] pl-[26px] text-[37px] leading-[54px] whitespace-nowrap text-[#222] [font-variant-ligatures:none]">
        Proprietary content. ©Great Learning. All Rights
        <br />
        Reserved. Unauthorized use or distribution prohibited.
      </footer>
      <div className="grid flex-1 grid-cols-5 justify-items-center bg-white pt-[44px] text-[#555]">
        <svg viewBox="0 0 48 48" className="size-12 fill-none stroke-current" strokeWidth="4" aria-hidden="true">
          <path d="M32 3L19 34l8 14" />
        </svg>
        <svg viewBox="0 0 48 48" className="size-12 fill-none stroke-[#aaa]" strokeWidth="4" aria-hidden="true">
          <path d="M16 3l13 31-8 14" />
        </svg>
        <svg viewBox="0 0 48 48" className="size-12 fill-none stroke-current" aria-hidden="true">
          <path d="M3 5h42" strokeWidth="4" />
          <path d="M3 29h26M34 29h11" strokeWidth="7" />
        </svg>
        <svg viewBox="0 0 48 48" className="size-12" aria-hidden="true">
          <rect x="2" y="2" width="44" height="44" rx="4" fill="none" stroke="#444" strokeWidth="5" />
          <text x="17" y="34" fontSize="28" fill="#555" fontFamily="Roboto, sans-serif">
            1
          </text>
        </svg>
        <svg viewBox="0 0 48 48" className="size-12 fill-none stroke-current" strokeWidth="4" aria-hidden="true">
          <path d="M2 46V18L24 1l22 17v28M16 32h16" />
        </svg>
      </div>
    </section>
  );
}

export default function App() {
  return (
    <main className="min-h-screen bg-white py-[79px] pr-[78px] pl-[80px] font-[Lato,sans-serif]">
      <div className="grid grid-cols-[1950fr_956fr] gap-x-[42px]">
        <LargePanel scene="interests" />
        <PhonePanel />
      </div>
      <div className="mt-[41px] grid grid-cols-[955fr_1906fr] gap-x-[87px]">
        <div className="flex flex-col gap-y-[40px]">
          <SmallPanel scene="location" />
          <SmallPanel scene="traffic" />
        </div>
        <LargePanel scene="map" flush />
      </div>
    </main>
  );
}
